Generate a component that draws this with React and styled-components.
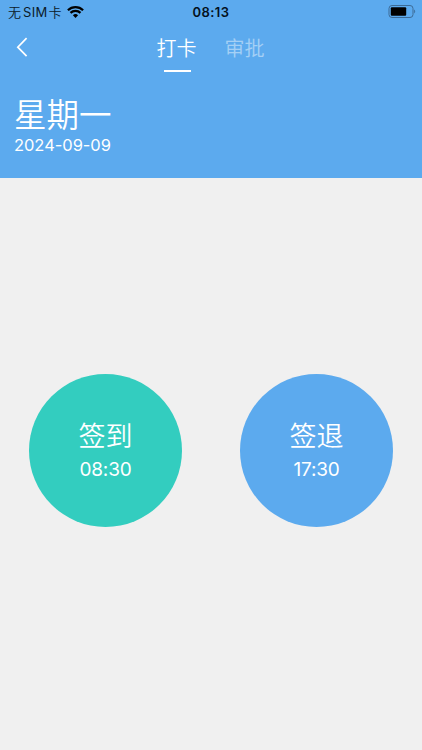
import React, { useState } from "react";
import styled, { createGlobalStyle } from "styled-components";

const tabs = ["打卡", "审批"];

const punches = [
    { label: "签到", time: "08:30", color: "#33cdbf" },
    { label: "签退", time: "17:30", color: "#5caaee" },
];

function StatusBar() {
    return (
        <Status>
            <Carrier>
                <span>无</span>
                <Sim>SIM</Sim>
                <span>卡</span>
                <Wifi viewBox="0 0 17 12">
                    <path d="M.9 4.2a11 11 0 0 1 15.2 0" />
                    <path d="M3.5 6.9a7.2 7.2 0 0 1 10 0" />
                    <path d="M8.5 11.9 5.9 9.3a3.7 3.7 0 0 1 5.2 0z" className="dot" />
                </Wifi>
            </Carrier>
            <Clock>08:13</Clock>
            <Battery viewBox="0 0 28 13">
                <rect x="1" y="0.5" width="24" height="12" rx="3" fill="none" stroke="#3c6b96" />
                <rect x="2.8" y="2.3" width="15.4" height="8.4" rx="1" fill="#000" />
                <path d="M26.2 4.6v3.8c1.3-.6 1.3-3.2 0-3.8z" fill="#3c6b96" />
            </Battery>
        </Status>
    );
}

function App() {
    const [active, setActive] = useState(0);

    return (
        <>
            <GlobalStyle />
            <Page>
                <Header>
                    <StatusBar />
                    <Nav>
                        <Back aria-label="返回">
                            <svg width="12" height="20" viewBox="0 0 12 20">
                                <path d="M10.6 1.2 1.8 10.2l8.8 9" />
                            </svg>
                        </Back>
                        <Tabs>
                            {tabs.map((tab, i) => (
                                <Tab key={tab} $active={i === active} onClick={() => setActive(i)}>
                                    {tab}
                                </Tab>
                            ))}
                        </Tabs>
                        <span />
                    </Nav>
                    <Today>
                        <Weekday>星期一</Weekday>
                        <DateText>2024-09-09</DateText>
                    </Today>
                </Header>
                <Main>
                    {punches.map((p) => (
                        <Punch key={p.label} $color={p.color}>
                            <PunchLabel>{p.label}</PunchLabel>
                            <PunchTime>{p.time}</PunchTime>
                        </Punch>
                    ))}
                </Main>
            </Page>
        </>
    );
}
export default App;

const GlobalStyle = createGlobalStyle`
    * {
        box-sizing: border-box;
    }
    body {
        margin: 0;
        font-family: Inter, "Noto Sans CJK SC", sans-serif;
    }
    button {
        border: none;
        padding: 0;
        background: none;
        font-family: inherit;
        color: inherit;
    }
`;

const Page = styled.div`
    display: flex;
    flex-direction: column;
    height: 750px;
    background-color: #f0f0f0;
`;

const Header = styled.header`
    height: 178px;
    background-color: #5caaee;
    color: white;
`;

const Status = styled.div`
    display: grid;
    grid-template-columns: 1fr auto 1fr;
    align-items: center;
    height: 24px;
    padding: 0 6px 0 8px;
    color: #0b1a29;
    line-height: 24px;
`;

const Carrier = styled.div`
    display: flex;
    align-items: center;
    height: 23px;
    font-size: 13px;
    font-weight: 350;
`;

const Sim = styled.span`
    margin: 0 1px 0 2px;
    font-weight: 400;
    letter-spacing: 0.3px;
`;

const Wifi = styled.svg`
    width: 17px;
    height: 12px;
    margin-left: 5px;
    fill: none;
    stroke: #000;
    stroke-width: 2.2;
    .dot {
        fill: #000;
        stroke: none;
    }
`;

const Clock = styled.div`
    margin-right: 2px;
    color: #04111d;
    font-size: 13px;
    font-weight: 600;
    letter-spacing: 0.4px;
`;

const Battery = styled.svg`
    justify-self: end;
    width: 28px;
    height: 13px;
    margin-bottom: 1px;
`;

const Nav = styled.nav`
    display: grid;
    grid-template-columns: 1fr auto 1fr;
    height: 48px;
`;

const Back = styled.button`
    display: flex;
    width: 44px;
    height: 48px;
    padding: 13px 0 0 16px;
    svg {
        fill: none;
        stroke: white;
        stroke-width: 1.7;
    }
`;

const Tabs = styled.div`
    display: flex;
    gap: 28px;
    margin-right: 1px;
`;

const Tab = styled.button`
    display: flex;
    flex-direction: column;
    align-items: center;
    padding-top: 4px;
    font-size: 20px;
    font-weight: 350;
    line-height: 42px;
    opacity: ${(props) => (props.$active ? 1 : 0.45)};
    &::after {
        content: "";
        width: 27px;
        height: 2px;
        margin-left: 1px;
        background-color: ${(props) => (props.$active ? "white" : "transparent")};
    }
`;

const Today = styled.div`
    padding: 22px 14px 0;
`;

const Weekday = styled.div`
    font-size: 32.5px;
    font-weight: 350;
    line-height: 44px;
`;

const DateText = styled.div`
    font-size: 16.5px;
    line-height: 15px;
    letter-spacing: -0.05px;
`;

const Main = styled.main`
    flex: 1;
    display: flex;
    justify-content: space-around;
    align-items: flex-start;
    padding-top: 196px;
`;

const Punch = styled.button`
    display: flex;
    flex-direction: column;
    align-items: center;
    width: 153px;
    height: 153px;
    padding-top: 43px;
    border-radius: 50%;
    background-color: ${(props) => props.$color};
    color: white;
`;

const PunchLabel = styled.span`
    font-size: 27px;
    font-weight: 350;
    line-height: 40px;
`;

const PunchTime = styled.span`
    font-size: 19px;
    line-height: 26px;
    letter-spacing: -0.2px;
`;
